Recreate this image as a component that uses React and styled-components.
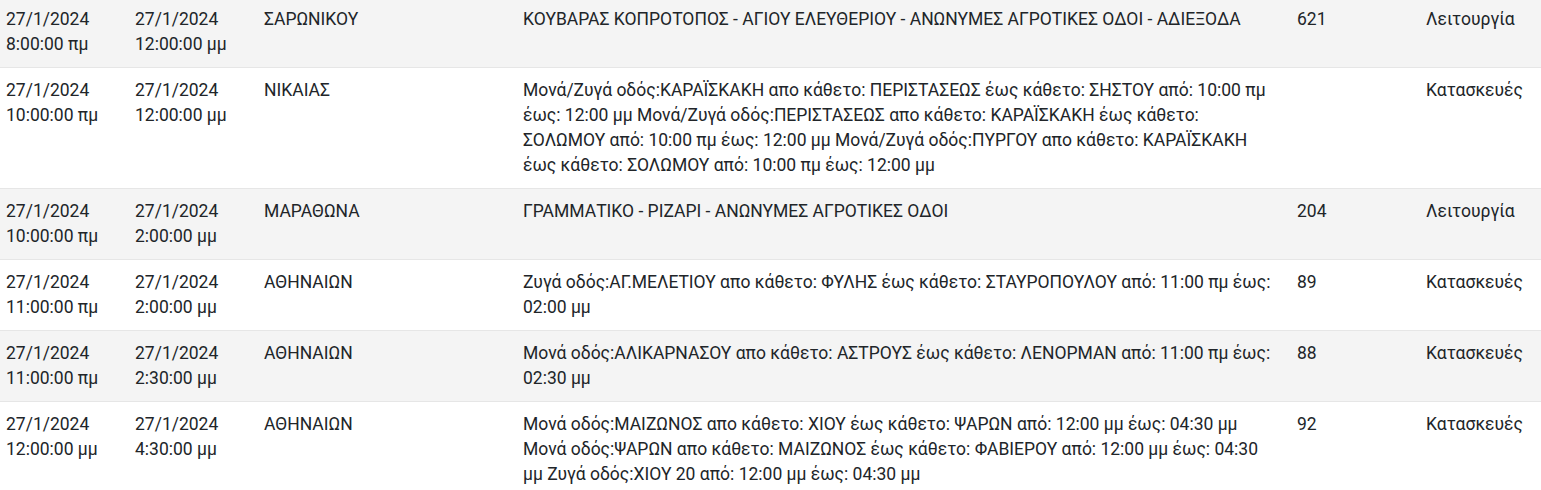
import React from "react";
import styled, { createGlobalStyle } from "styled-components";

const Global = createGlobalStyle`
  html, body { margin: 0; padding: 0; background: #fff; }
  body { font-family: Roboto, "Noto Sans", "Liberation Sans", sans-serif; color: #212529; overflow: hidden; }
`;

const Wrap = styled.div`
  margin-top: -3px;
`;

const Table = styled.table`
  width: 1541px;
  border-collapse: collapse;
  table-layout: fixed;
  font-size: 17.5px;
  line-height: 25px;
`;

const Row = styled.tr`
  background: ${(p) => (p.$striped ? "#f4f4f4" : "#ffffff")};
`;

const Cell = styled.td`
  padding: 10px 12px 10px 6px;
  vertical-align: top;
  border-bottom: 1px solid #e6e6e6;
  text-align: left;
  font-weight: 400;
`;

const rows = [
  ["27/1/2024\n8:00:00 πμ", "27/1/2024\n12:00:00 μμ", "ΣΑΡΩΝΙΚΟΥ", "ΚΟΥΒΑΡΑΣ ΚΟΠΡΟΤΟΠΟΣ - ΑΓΙΟΥ ΕΛΕΥΘΕΡΙΟΥ - ΑΝΩΝΥΜΕΣ ΑΓΡΟΤΙΚΕΣ ΟΔΟΙ - ΑΔΙΕΞΟΔΑ", "621", "Λειτουργία"],
  ["27/1/2024\n10:00:00 πμ", "27/1/2024\n12:00:00 μμ", "ΝΙΚΑΙΑΣ", "Μονά/Ζυγά οδός:ΚΑΡΑΪΣΚΑΚΗ απο κάθετο: ΠΕΡΙΣΤΑΣΕΩΣ έως κάθετο: ΣΗΣΤΟΥ από: 10:00 πμ έως: 12:00 μμ Μονά/Ζυγά οδός:ΠΕΡΙΣΤΑΣΕΩΣ απο κάθετο: ΚΑΡΑΪΣΚΑΚΗ έως κάθετο: ΣΟΛΩΜΟΥ από: 10:00 πμ έως: 12:00 μμ Μονά/Ζυγά οδός:ΠΥΡΓΟΥ απο κάθετο: ΚΑΡΑΪΣΚΑΚΗ έως κάθετο: ΣΟΛΩΜΟΥ από: 10:00 πμ έως: 12:00 μμ", "", "Κατασκευές"],
  ["27/1/2024\n10:00:00 πμ", "27/1/2024\n2:00:00 μμ", "ΜΑΡΑΘΩΝΑ", "ΓΡΑΜΜΑΤΙΚΟ - ΡΙΖΑΡΙ - ΑΝΩΝΥΜΕΣ ΑΓΡΟΤΙΚΕΣ ΟΔΟΙ", "204", "Λειτουργία"],
  ["27/1/2024\n11:00:00 πμ", "27/1/2024\n2:00:00 μμ", "ΑΘΗΝΑΙΩΝ", "Ζυγά οδός:ΑΓ.ΜΕΛΕΤΙΟΥ απο κάθετο: ΦΥΛΗΣ έως κάθετο: ΣΤΑΥΡΟΠΟΥΛΟΥ από: 11:00 πμ έως: 02:00 μμ", "89", "Κατασκευές"],
  ["27/1/2024\n11:00:00 πμ", "27/1/2024\n2:30:00 μμ", "ΑΘΗΝΑΙΩΝ", "Μονά οδός:ΑΛΙΚΑΡΝΑΣΟΥ απο κάθετο: ΑΣΤΡΟΥΣ έως κάθετο: ΛΕΝΟΡΜΑΝ από: 11:00 πμ έως: 02:30 μμ", "88", "Κατασκευές"],
  ["27/1/2024\n12:00:00 μμ", "27/1/2024\n4:30:00 μμ", "ΑΘΗΝΑΙΩΝ", "Μονά οδός:ΜΑΙΖΩΝΟΣ απο κάθετο: ΧΙΟΥ έως κάθετο: ΨΑΡΩΝ από: 12:00 μμ έως: 04:30 μμ Μονά οδός:ΨΑΡΩΝ απο κάθετο: ΜΑΙΖΩΝΟΣ έως κάθετο: ΦΑΒΙΕΡΟΥ από: 12:00 μμ έως: 04:30 μμ Ζυγά οδός:ΧΙΟΥ 20 από: 12:00 μμ έως: 04:30 μμ", "92", "Κατασκευές"],
];

const widths = [129, 129, 259, 774, 129, 121];

function Lines({ text }) {
  const parts = text.split("\n");
  return parts.map((p, i) => (
    <React.Fragment key={i}>
      {p}
      {i < parts.length - 1 && <br />}
    </React.Fragment>
  ));
}

export default function App() {
  return (
    <>
      <Global />
      <Wrap>
        <Table>
          <colgroup>
            {widths.map((w, i) => (
              <col key={i} style={{ width: w }} />
            ))}
          </colgroup>
          <tbody>
            {rows.map((r, i) => (
              <Row key={i} $striped={i % 2 === 0}>
                {r.map((c, j) => (
                  <Cell key={j}>
                    <Lines text={c} />
                  </Cell>
                ))}
              </Row>
            ))}
          </tbody>
        </Table>
      </Wrap>
    </>
  );
}
